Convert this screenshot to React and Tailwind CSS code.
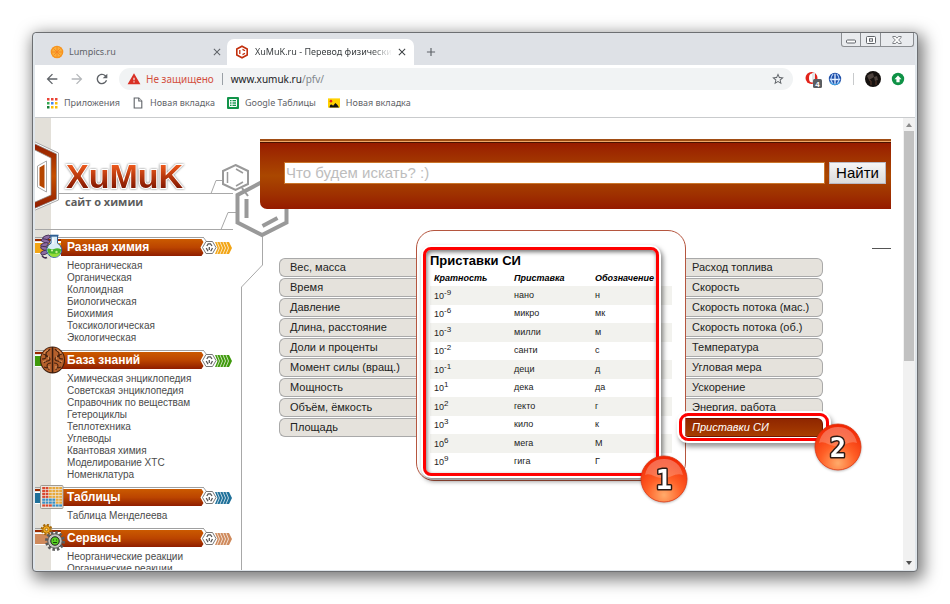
// src/App.jsx
import React, { useState } from 'react';
import {
  MdAdd,
  MdArrowBack,
  MdArrowForward,
  MdClose,
  MdRefresh,
  MdStarBorder,
  MdWarning,
} from 'react-icons/md';

const sections = [
  {
    title: 'Разная химия',
    icon: FlaskIcon,
    color: '#f2a516',
    items: [
      'Неорганическая',
      'Органическая',
      'Коллоидная',
      'Биологическая',
      'Биохимия',
      'Токсикологическая',
      'Экологическая',
    ],
  },
  {
    title: 'База знаний',
    icon: BrainIcon,
    color: '#3f9a0c',
    items: [
      'Химическая энциклопедия',
      'Советская энциклопедия',
      'Справочник по веществам',
      'Гетероциклы',
      'Теплотехника',
      'Углеводы',
      'Квантовая химия',
      'Моделирование ХТС',
      'Номенклатура',
    ],
  },
  {
    title: 'Таблицы',
    icon: TableIcon,
    color: '#1f7099',
    items: ['Таблица Менделеева'],
  },
  {
    title: 'Сервисы',
    icon: GearsIcon,
    color: '#cf8a5c',
    items: ['Неорганические реакции', 'Органические реакции'],
  },
];

const leftTabs = [
  'Вес, масса',
  'Время',
  'Давление',
  'Длина, расстояние',
  'Доли и проценты',
  'Момент силы (вращ.)',
  'Мощность',
  'Объём, ёмкость',
  'Площадь',
];

const rightTabs = [
  'Расход топлива',
  'Скорость',
  'Скорость потока (мас.)',
  'Скорость потока (об.)',
  'Температура',
  'Угловая мера',
  'Ускорение',
  'Энергия, работа',
  'Приставки СИ',
];

const prefixes = [
  { power: '-9', name: 'нано', sign: 'н' },
  { power: '-6', name: 'микро', sign: 'мк' },
  { power: '-3', name: 'милли', sign: 'м' },
  { power: '-2', name: 'санти', sign: 'с' },
  { power: '-1', name: 'деци', sign: 'д' },
  { power: '1', name: 'дека', sign: 'да' },
  { power: '2', name: 'гекто', sign: 'г' },
  { power: '3', name: 'кило', sign: 'к' },
  { power: '6', name: 'мега', sign: 'М' },
  { power: '9', name: 'гига', sign: 'Г' },
];

/* ---------- section icons ---------- */

function FlaskIcon() {
  return (
    <svg viewBox="0 0 28 28" className="h-7 w-7">
      <g stroke="#3f2c4f" strokeWidth="0.8" fill="#8d6ba3">
        <ellipse cx="8.5" cy="4.5" rx="4" ry="2" transform="rotate(-20 8.5 4.5)" />
        <ellipse cx="7.5" cy="8" rx="4.5" ry="1.8" transform="rotate(15 7.5 8)" />
        <ellipse cx="6.5" cy="12" rx="4" ry="2" transform="rotate(-20 6.5 12)" />
        <ellipse cx="7" cy="15.5" rx="4.5" ry="1.8" transform="rotate(15 7 15.5)" />
        <ellipse cx="6.5" cy="19.5" rx="4" ry="2" transform="rotate(-20 6.5 19.5)" />
        <path d="M4 22.500c1 2 3 3 5 2" fill="none" strokeWidth="1.6" />
      </g>
      <path d="M13 3h6.500v7.200a7.500 7.500 0 1 1-6.500 0z" fill="#d9ecf7" stroke="#2d5f94" />
      <path d="M9.500 16c2-1.600 4 1.300 6.500 0s5-.8 7 .2a6.800 6.800 0 1 1-13.500 0z" fill="#46b52c" />
      <path d="M11 20c3 1 8 1 11 0-1 3-3 4-5.500 4s-5-1.500-5.500-4z" fill="#95dc3a" />
      <circle cx="14" cy="17.5" r="1" fill="#d9f7a8" />
      <circle cx="18.5" cy="19" r="1.200" fill="#c4f08a" />
      <path d="M12 2.500h8.500" stroke="#2d5f94" strokeWidth="1.6" />
      <path d="M15 5v6" stroke="#fff" strokeWidth="1.2" />
    </svg>
  );
}

function BrainIcon() {
  return (
    <svg viewBox="0 0 28 28" className="h-7 w-7">
      <ellipse cx="14.5" cy="14" rx="12.5" ry="13.5" fill="#3b1d0e" />
      <path
        d="M13.800 1.500C9 1 3.200 6 3 13c-.2 6.500 3.800 13 10.800 13.300zM15.300 1.500c4.800-.5 10.500 4.500 10.700 11.500.2 6.500-3.700 13-10.700 13.300z"
        fill="#b5602c"
      />
      <g fill="none" stroke="#4a230f" strokeWidth="1.1">
        <path d="M12 3c-1 2-4 2-4 5s4 2 4 5-5 1-6 4M5 8c2 0 3 1 3 3s-2 2-4 2M13 17c-3 0-4 1-4 3s2 2 2 4M9 22l-3-1" />
        <path d="M17 3c1 2 4 2 4 5s-4 2-4 5 5 1 6 4M24 8c-2 0-3 1-3 3s2 2 4 2M16 17c3 0 4 1 4 3s-2 2-2 4M20 22l3-1" />
      </g>
      <g fill="none" stroke="#eba066" strokeWidth="0.9">
        <path d="M10 4c-2 1-4 2-4 4M10 10c1 0 1 2 0 3M5 16c1-1 2-1 3-1M11 20v3" />
        <path d="M19 4c2 1 4 2 4 4M19 10c-1 0-1 2 0 3M24 16c-1-1-2-1-3-1M18 20v3" />
      </g>
    </svg>
  );
}

function TableIcon() {
  const cells = [];
  for (let row = 0; row < 7; row++) {
    for (let col = 0; col < 6; col++) {
      let fill = col < 2 ? '#d9482f' : '#e9a93c';
      if (row > 3) fill = col < 4 ? '#3b8fc4' : '#e9a93c';
      if (row === 6) fill = col < 3 ? '#d9482f' : '#3b8fc4';
      cells.push(<rect key={`${row}-${col}`} x={4.2 + col * 3.4} y={4 + row * 2.9} width="2.8" height="2.2" fill={fill} />);
    }
  }
  return (
    <svg viewBox="0 0 28 28" className="h-7 w-7">
      <rect x="2.5" y="2.5" width="22.5" height="23" rx="1" fill="#ece7df" stroke="#a09a92" />
      {cells}
    </svg>
  );
}

function GearsIcon() {
  return (
    <svg viewBox="0 0 28 28" className="h-7 w-7">
      <circle cx="8.5" cy="5.5" r="4.500" fill="none" stroke="#a86a08" strokeWidth="2.6" strokeDasharray="2 1.5" />
      <circle cx="8.5" cy="5.5" r="3.700" fill="#f0a91d" stroke="#b06d05" />
      <circle cx="8.5" cy="5.5" r="1.300" fill="#fff0c0" stroke="#8a5206" strokeWidth="0.7" />
      <circle cx="17" cy="17" r="8.500" fill="none" stroke="#5c5c5c" strokeWidth="3" strokeDasharray="2.500 1.950" />
      <circle cx="17" cy="17" r="7.200" fill="#c3c3c0" stroke="#555" />
      <circle cx="17" cy="17" r="4.300" fill="#2d7a14" stroke="#333" />
      <circle cx="17" cy="17" r="3.500" fill="#59cf25" />
      <path d="M15 16h1M18 16h1M15 18.500h4" stroke="#154a06" />
    </svg>
  );
}

/* ---------- browser icons ---------- */

function OrangeIcon() {
  return (
    <svg viewBox="0 0 14 14" className="h-3.5 w-3.5 shrink-0">
      <circle cx="7" cy="7" r="6.3" fill="#f7941e" />
      <circle cx="7" cy="7" r="5" fill="#fbb03b" />
      <path d="M7 2v10M2 7h10M3.500 3.500l7 7M10.500 3.500l-7 7" stroke="#f58220" strokeWidth="0.8" />
    </svg>
  );
}

function BenzeneIcon() {
  return (
    <svg viewBox="0 0 14 14" className="h-3.5 w-3.5 shrink-0" fill="none" stroke="#c22f0c">
      <path d="M7 1.200l5.200 2.800v6L7 12.800 1.800 10V4z" strokeWidth="1.6" />
      <path d="M4.800 5v4M7.500 4.400l2.500 1.400M7.500 9.600l2.500-1.400" strokeWidth="1.3" />
    </svg>
  );
}

function AppsIcon() {
  const colors = ['#ea4335', '#ea4335', '#ea4335', '#34a853', '#4285f4', '#fbbc05', '#188038', '#fbbc05', '#fbbc05'];
  return (
    <svg viewBox="0 0 12 12" className="h-3 w-3 shrink-0">
      {colors.map((c, i) => (
        <rect key={i} x={1 + (i % 3) * 4} y={1 + Math.floor(i / 3) * 4} width="2.5" height="2.5" fill={c} />
      ))}
    </svg>
  );
}

function PageIcon() {
  return (
    <svg viewBox="0 0 12 12" className="h-3 w-3 shrink-0" fill="#fff" stroke="#5f6368" strokeWidth="1.1">
      <path d="M2.200 1h4.600l3 3v7H2.200z" />
      <path d="M6.800 1v3h3" />
    </svg>
  );
}

function SheetsIcon() {
  return (
    <svg viewBox="0 0 12 12" className="h-3 w-3 shrink-0">
      <rect width="12" height="12" rx="1" fill="#12944a" />
      <path d="M2.500 2.500h7v7h-7zM2.500 4.800h7M2.500 7.200h7M5 2.500v7" fill="none" stroke="#fff" />
    </svg>
  );
}

function PictureIcon() {
  return (
    <svg viewBox="0 0 13 12" className="h-3 w-3 shrink-0">
      <rect y="1" width="13" height="10" fill="#ffd200" />
      <path d="M1.500 11l1-3 1.500-.5L5.500 9 8 6l2 2 2 3z" fill="#111" />
      <circle cx="3.2" cy="4" r="1.4" fill="#e8281a" />
    </svg>
  );
}

function OperaIcon() {
  return (
    <svg viewBox="0 0 18 18" className="h-4.5 w-4.5">
      <circle cx="6.5" cy="8" r="6" fill="#e2231a" />
      <ellipse cx="7" cy="8" rx="3" ry="4.6" fill="#fff" />
      <path d="M7 3l3-1v11l-3-1z" fill="#e4e6e8" />
      <rect x="8" y="9" width="9" height="9" rx="1.5" fill="#5a5d61" />
      <text x="12.5" y="16.5" textAnchor="middle" fontSize="8" fontWeight="bold" fill="#fff" fontFamily="Liberation Sans, sans-serif">
        4
      </text>
    </svg>
  );
}

function GlobeIcon() {
  return (
    <svg viewBox="0 0 14 14" className="h-3.5 w-3.5" fill="none">
      <circle cx="7" cy="7" r="6.2" fill="#1e4fa8" />
      <path d="M7 1.800v10.400M1.800 7.500h10.400" stroke="#e8f2ff" strokeWidth="1.3" />
      <path d="M5 2c-2.400 3-2.400 7 0 10M9 2c2.400 3 2.400 7 0 10" stroke="#b9d6ff" strokeWidth="1.2" />
      <path d="M2 10a6 6 0 0 0 10 0" stroke="#3f9fe0" strokeWidth="1.2" />
    </svg>
  );
}

function UpdateIcon() {
  return (
    <svg viewBox="0 0 14 14" className="h-3.5 w-3.5">
      <circle cx="7" cy="7" r="6.2" fill="#0f9246" />
      <path d="M7 3.500l3.500 3.700H8.600v3H5.400v-3H3.500z" fill="#fff" />
    </svg>
  );
}

/* ---------- browser chrome ---------- */

function TabStrip() {
  return (
    <div className="flex h-8 items-end bg-[#dee1e6] text-[9px] text-[#5f6368]">
      <div className="flex h-[26px] w-48 items-center pr-1 pl-[15px]">
        <OrangeIcon />
        <span className="ml-[5px] flex-1">Lumpics.ru</span>
        <button type="button" aria-label="Закрыть вкладку">
          <MdClose className="h-3 w-3" />
        </button>
      </div>
      <div className="flex h-[26px] w-[187px] items-center rounded-t-[7px] bg-white pr-1.5 pl-2 text-[#3c4043]">
        <BenzeneIcon />
        <span className="ml-[6px] flex-1 overflow-hidden whitespace-nowrap [mask-image:linear-gradient(to_right,#000_85%,transparent)]">
          XuMuK.ru - Перевод физически
        </span>
        <button type="button" aria-label="Закрыть вкладку" className="ml-1">
          <MdClose className="h-3 w-3" />
        </button>
      </div>
      <button type="button" aria-label="Новая вкладка" className="ml-2.5 flex h-[26px] items-center">
        <MdAdd className="h-3.5 w-3.5" />
      </button>
      <div className="mr-px ml-auto flex h-3.5 self-start rounded-b-[3px] border border-t-0 border-[#8b8e92] bg-[#e9ebee] text-[#5f6368]">
        <button type="button" aria-label="Свернуть" className="flex w-[19px] items-center justify-center border-r border-[#8b8e92]">
          <svg viewBox="0 0 10 8" className="h-2 w-2.5">
            <rect x="0.5" y="4" width="9" height="3" rx="1" fill="#fff" stroke="currentColor" />
          </svg>
        </button>
        <button type="button" aria-label="Развернуть" className="flex w-5 items-center justify-center border-r border-[#8b8e92]">
          <svg viewBox="0 0 10 8" className="h-2 w-2.5">
            <rect x="0.5" y="0.5" width="9" height="7" rx="1" fill="#fff" stroke="currentColor" />
            <rect x="3.5" y="2.8" width="3" height="2.4" fill="#fff" stroke="currentColor" />
          </svg>
        </button>
        <button type="button" aria-label="Закрыть" className="flex w-8 items-center justify-center">
          <svg viewBox="0 0 10 8" className="h-2 w-2.5">
            <path
              d="M.8.500h2.700L5 2.200 6.500.500h2.700v1L6.600 4l2.600 2.500v1H6.500L5 5.800 3.500 7.500H.8v-1L3.400 4 .8 1.500z"
              fill="#fff"
              stroke="currentColor"
              strokeWidth="0.8"
            />
          </svg>
        </button>
      </div>
    </div>
  );
}

function AddressBar() {
  return (
    <div className="flex h-7 items-center bg-white pr-2.5 pl-[9px] text-[#5f6368]">
      <div className="flex gap-[9px]">
        <button type="button" aria-label="Назад">
          <MdArrowBack className="h-4 w-4" />
        </button>
        <button type="button" aria-label="Вперёд" className="text-[#b4b7ba]">
          <MdArrowForward className="h-4 w-4" />
        </button>
        <button type="button" aria-label="Обновить">
          <MdRefresh className="h-4 w-4" />
        </button>
      </div>
      <div className="ml-[9px] flex h-[22px] flex-1 items-center rounded-full bg-[#f1f3f4] px-2 text-[10px]">
        <MdWarning className="h-3.5 w-3.5 text-[#d93025]" />
        <span className="ml-[5px] border-r border-[#9aa0a6] pr-2 leading-3 whitespace-nowrap text-[#d3503f]">Не защищено</span>
        <span className="ml-2 flex-1 text-[#202124]">
          www.xumuk.ru<span className="text-[#80868b]">/pfv/</span>
        </span>
        <button type="button" aria-label="Добавить в закладки">
          <MdStarBorder className="h-3.5 w-3.5" />
        </button>
      </div>
      <div className="ml-3 flex items-center">
        <OperaIcon />
        <span className="ml-[5px]">
          <GlobeIcon />
        </span>
        <span className="mx-[11px] h-3 w-px bg-[#c8cacc]" />
        <svg viewBox="0 0 16 16" className="h-4 w-4">
          <circle cx="8" cy="8" r="8" fill="#15110f" />
          <path d="M2 5c3-3 5-2 6-3l1 4-5 3zM9 6l3-1 1 4-3 1z" fill="#4d423d" />
          <path d="M4 9l2 1v4M11 10v4" stroke="#5d3a2a" fill="none" />
        </svg>
        <span className="ml-2.5">
          <UpdateIcon />
        </span>
      </div>
    </div>
  );
}

function Bookmarks() {
  const links = [
    { icon: AppsIcon, label: 'Приложения' },
    { icon: PageIcon, label: 'Новая вкладка' },
    { icon: SheetsIcon, label: 'Google Таблицы' },
    { icon: PictureIcon, label: 'Новая вкладка' },
  ];
  return (
    <nav className="flex h-[25px] gap-3 border-b border-[#c9cbcd] bg-white pb-1 pl-[11px] text-[9px] text-[#5f6368]">
      {links.map((l, i) => (
        <a key={i} href="#" className="flex items-center gap-[6px] whitespace-nowrap">
          <l.icon />
          {l.label}
        </a>
      ))}
    </nav>
  );
}

function Scrollbar() {
  return (
    <div className="flex w-3 shrink-0 flex-col items-center bg-[#f1f1f1] py-1" aria-hidden="true">
      <svg viewBox="0 0 6 4" className="my-px h-1 w-1.5">
        <path d="M3 0l3 4H0z" fill="#8c8c8c" />
      </svg>
      <div className="mt-[3px] h-[230px] w-2.5 bg-[#c1c1c1]" />
      <svg viewBox="0 0 6 4" className="mt-auto mb-px h-1 w-1.5">
        <path d="M3 4l3-4H0z" fill="#505050" />
      </svg>
    </div>
  );
}

/* ---------- site ---------- */

// thin lines and benzene rings that run from the logo down the sidebar edge
function Molecules() {
  return (
    <svg viewBox="0 0 260 1000" className="pointer-events-none absolute top-0 left-0 h-[1000px] w-[260px]" fill="none" stroke="#999">
      <g stroke="#a8a8a8">
        <path d="M23 75.500h175M176 75.500l5-13h7M0 111.500h198M186 111.500l7-17h9" />
        <path d="M227.500 116v31l-21 22v831" />
      </g>
      <path d="M207 70l6 8" strokeWidth="2" />
      <path d="M200.500 47l12.500 6v13l-12.500 6-12.500-6V53z" strokeWidth="2" fill="#fff" />
      <path d="M192.500 54v11M201 51l7 4M201 68l7-4" strokeWidth="1.5" />
      <path d="M227 64l24.500 13v27.500L227 117l-24.500-12.500V77z" strokeWidth="4" />
      <path d="M211.500 81v19M227.500 108l15-8" strokeWidth="4" />
    </svg>
  );
}

function Logo() {
  return (
    <header className="relative h-[119px] pt-[37px] pl-[30px]">
      <svg viewBox="0 0 26 72" className="absolute top-[22px] left-0 h-[72px] w-[26px]">
        <defs>
          <linearGradient id="ring" x1="0" y1="0" x2="0" y2="1">
            <stop offset="0" stopColor="#8f1b00" />
            <stop offset="0.5" stopColor="#c65000" />
            <stop offset="1" stopColor="#8f1b00" />
          </linearGradient>
        </defs>
        <path d="M-2 1L23.500 13v47L-2 71" fill="#fff" stroke="#a9a9a9" />
        <path d="M-2 3L21.500 14v45L-2 69v-6l18-8V18L-2 9z" fill="url(#ring)" stroke="#8a8a8a" strokeWidth="0.7" />
        <path d="M2.500 26l9-5v31l-9-5z" fill="#fff" stroke="#a9a9a9" />
        <path d="M4.500 27.500l5-3v24l-5-3z" fill="#b54600" />
      </svg>
      <svg viewBox="0 0 124 40" className="block h-10 w-[124px] overflow-visible drop-shadow-[0_0_1px_#777]">
        <defs>
          <linearGradient id="word" x1="0" y1="0" x2="0" y2="1">
            <stop offset="0.2" stopColor="#ee5a1c" />
            <stop offset="0.85" stopColor="#7d1400" />
          </linearGradient>
        </defs>
        <text
          x="1"
          y="33"
          fontSize="34"
          fontWeight="bold"
          fontFamily="Liberation Sans, sans-serif"
          fill="url(#word)"
          stroke="#fff"
          strokeWidth="2"
          paintOrder="stroke"
        >
          XuMuK
        </text>
      </svg>
      <p className="font-[Open_Sans,sans-serif] text-[11px] leading-[14px] font-bold text-[#5c5c5c]">сайт о химии</p>
    </header>
  );
}

function MenuSection({ section }) {
  const Icon = section.icon;
  return (
    <section className="mb-1.5">
      <div className="relative flex h-[19px] pr-[9px]">
        <div className="flex w-[26px] flex-col border-t border-[#a0a0a0] pt-px">
          <div className="h-0.5 bg-[#9a2a00]" />
          <div className="mt-px h-3 border-y border-white" style={{ backgroundColor: section.color }} />
        </div>
        <div className="flex-1 border-t border-[#a0a0a0] pt-px">
          <h2 className="h-[17px] bg-linear-to-b from-[#cb5a00] via-[#bb4400] to-[#8f1d00] pl-1.5 text-[12px] leading-[17px] font-bold text-white">
            {section.title}
          </h2>
        </div>
        <svg viewBox="0 0 32 19" className="-ml-1 h-[19px] w-8 overflow-visible">
          <path d="M1.500 2H6v17H1.500l2-3-3-5.500 3-5.500z" fill="#fff" />
          <path d="M2 .5h1.500l3 4" stroke="#a0a0a0" fill="none" />
          <path d="M15 5h14l3 6-3 6H15l2.500-6z" fill={section.color} />
          <path
            d="M17 5l2.500 6-2.500 6M20 5l2.500 6-2.500 6M23 5l2.500 6-2.500 6M26 5l2.500 6-2.500 6"
            stroke="#fff"
            strokeOpacity="0.8"
            strokeWidth="0.9"
            fill="none"
          />
          <path d="M6 4.500h6.500l3.500 6-3.500 6H6l-3.500-6z" fill="#fff" stroke="#777" />
          <path d="M6.800 9l1.400-2.200h2.300L12 9M6.200 11l1.800 3.300M12.500 11l-1.800 3.300M9.300 10v3" stroke="#555" strokeWidth="1.3" fill="none" />
        </svg>
        <div className="absolute -top-1 left-[3px]">
          <Icon />
        </div>
      </div>
      <ul className="mt-1 pl-8 text-[10px] leading-3 text-[#4b4b4b]">
        {section.items.map((item) => (
          <li key={item}>
            <a href="#" className="whitespace-nowrap">
              {item}
            </a>
          </li>
        ))}
      </ul>
    </section>
  );
}

function SearchBar() {
  const [query, setQuery] = useState('');
  return (
    <form onSubmit={(e) => e.preventDefault()} className="overflow-hidden rounded-bl-[7px]">
      <div className="h-1 border-t-2 border-b border-t-[#a04d14] border-b-[#4a1200] bg-[#f0a868]" />
      <div className="flex items-center gap-1 bg-linear-to-b from-[#981b00] via-[#aa4700] to-[#951a00] pt-[19px] pr-[5px] pb-[25px] pl-6">
        <input
          type="text"
          aria-label="Поиск"
          value={query}
          onChange={(e) => setQuery(e.target.value)}
          placeholder="Что будем искать? :)"
          className="h-[22px] min-w-0 flex-1 border border-[#c9752a] bg-white pl-px text-[15px] placeholder:text-[#bdbdbd]"
        />
        <button type="submit" className="h-[22px] w-[57px] border border-[#b9b9c4] bg-linear-to-b from-[#f6f6f6] to-[#dcdcdc] text-[15px] leading-5 text-black">
          Найти
        </button>
      </div>
    </form>
  );
}

function UnitTab({ label, side, active, onClick }) {
  const shape = side === 'left' ? 'rounded-l-md border-r-0 pl-2.5' : 'rounded-r-md border-l-0 pl-1.5';
  const look = active
    ? 'border-[#6e1500] bg-linear-to-b from-[#8f2600] to-[#a83e00] text-white italic'
    : 'border-[#a9a9a9] bg-[#e5e2dc] text-[#222]';
  return (
    <button
      type="button"
      onClick={onClick}
      className={`block h-[19px] w-full border text-left leading-[17px] whitespace-nowrap ${shape} ${look}`}
    >
      {label}
    </button>
  );
}

function PrefixTable() {
  return (
    <div className="relative z-10 rounded-[18px] border border-[#b5563f] bg-white px-[13px] pt-[21px] pb-[9px]">
      <h2 className="text-[13px] leading-[17px] font-bold text-black">Приставки СИ</h2>
      <table className="w-full table-fixed border-collapse text-left text-[9px] leading-3 text-[#222]">
        <thead>
          <tr className="h-[17px] text-black italic">
            <th className="w-20 p-0 pl-1">Кратность</th>
            <th className="w-[81px] p-0 pl-1">Приставка</th>
            <th className="p-0 pl-1">Обозначение</th>
          </tr>
        </thead>
        <tbody>
          {prefixes.map((p) => (
            <tr key={p.power} className="odd:h-[19px] odd:bg-[#f2f2ee] even:h-[18px]">
              <td className="p-0 pl-1">
                10<sup className="text-[8px]">{p.power}</sup>
              </td>
              <td className="p-0 pb-0.5 pl-1">{p.name}</td>
              <td className="p-0 pb-0.5 pl-1">{p.sign}</td>
            </tr>
          ))}
        </tbody>
      </table>
      <div className="pointer-events-none absolute top-4 right-[26px] bottom-1 left-1.5 rounded-lg border-3 border-[#ff0000] shadow-[0_0_0_2px_#fff,2px_3px_5px_2px_rgba(0,0,0,0.5),inset_1px_2px_4px_rgba(0,0,0,0.55)]" />
      <div className="absolute right-[-3px] bottom-[-23px]">
        <Marker value="1" />
      </div>
    </div>
  );
}

function Marker({ value }) {
  return (
    <svg viewBox="0 0 48 48" className="h-12 w-12 overflow-visible drop-shadow-[0_1px_1px_rgba(0,0,0,0.25)]">
      <defs>
        <radialGradient id="ball" cx="0.5" cy="0.85" r="0.85">
          <stop offset="0" stopColor="#ffab6b" />
          <stop offset="0.45" stopColor="#ff5f26" />
          <stop offset="1" stopColor="#f02200" />
        </radialGradient>
        <linearGradient id="gloss" x1="0" y1="0" x2="0" y2="1">
          <stop offset="0" stopColor="#fff" stopOpacity="0.3" />
          <stop offset="1" stopColor="#fff" stopOpacity="0.2" />
        </linearGradient>
      </defs>
      <circle cx="24" cy="24" r="23" fill="url(#ball)" stroke="#dc3510" strokeWidth="0.8" />
      <path d="M5 20C7 10 14 4 24 4s17 6 19 16c-7-3-12 3-20 3S10 17 5 20z" fill="url(#gloss)" />
      <text
        x="24"
        y="34"
        textAnchor="middle"
        fontSize="27"
        fontWeight="bold"
        fontFamily="DejaVu Sans Mono, monospace"
        fill="#fff"
        stroke="#2b1a14"
        strokeWidth="3"
        strokeLinejoin="round"
        paintOrder="stroke"
      >
        {value}
      </text>
    </svg>
  );
}

function Converter() {
  const [active, setActive] = useState('Приставки СИ');
  return (
    <div className="mt-[21px] grid grid-cols-[1fr_270px_1fr_68px] items-start pl-[19px] text-[11px]">
      <div className="flex flex-col gap-px pt-7">
        {leftTabs.map((t) => (
          <UnitTab key={t} label={t} side="left" active={t === active} onClick={() => setActive(t)} />
        ))}
      </div>
      <PrefixTable />
      <div className="relative z-20 flex flex-col gap-px pt-7">
        {rightTabs.map((t) => (
          <UnitTab key={t} label={t} side="right" active={t === active} onClick={() => setActive(t)} />
        ))}
        <div className="pointer-events-none absolute -right-1.5 -bottom-1 -left-[7px] h-7 rounded-[9px] border-3 border-[#ff0000] shadow-[0_0_0_2px_#fff,2px_4px_5px_2px_rgba(0,0,0,0.4),inset_0_0_0_1px_#fff]" />
        <div className="absolute right-[-39px] bottom-[-34px]">
          <Marker value="2" />
        </div>
      </div>
      <hr className="mt-[18px] ml-auto w-[19px] border-[#555]" />
    </div>
  );
}

export default function App() {
  return (
    <div className="h-screen overflow-hidden bg-white p-8 font-[Noto_Sans,sans-serif]">
      <div className="flex h-full flex-col rounded-[4px] border border-[#6d6f72] bg-[#dfe5ea] px-0.5 pb-px shadow-[3px_5px_16px_3px_rgba(0,0,0,0.5)]">
        <TabStrip />
        <AddressBar />
        <Bookmarks />
        <div className="relative flex min-h-0 flex-1 overflow-hidden bg-white font-[Liberation_Sans,Arial,sans-serif]">
          <aside className="w-[206px] shrink-0 bg-[linear-gradient(to_right,#e3e0d9_16px,transparent_16px)]">
            <Logo />
            {sections.map((s) => (
              <MenuSection key={s.title} section={s} />
            ))}
          </aside>
          <Molecules />
          <main className="relative min-w-0 flex-1 pt-[21px] pr-3 pl-[19px]">
            <SearchBar />
            <Converter />
          </main>
          <Scrollbar />
        </div>
      </div>
    </div>
  );
}
